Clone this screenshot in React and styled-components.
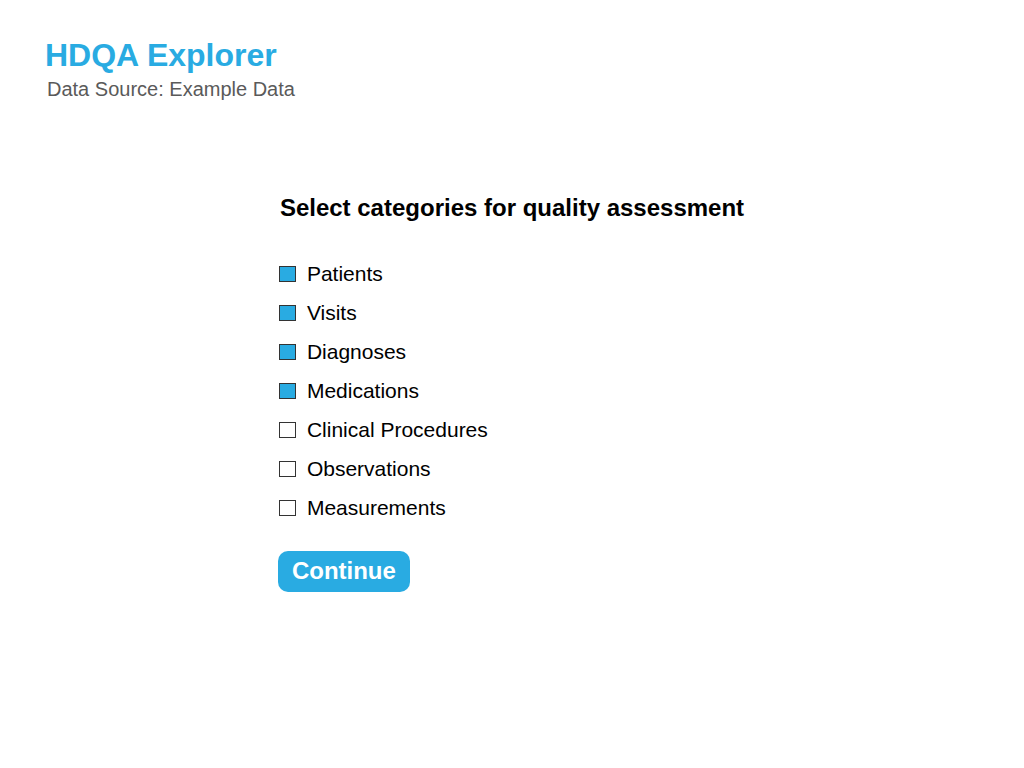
import React, { useState } from "react";
import styled, { createGlobalStyle } from "styled-components";

const GlobalStyle = createGlobalStyle`
  body {
    margin: 0;
    background: #fff;
    font-family: "Liberation Sans", Arial, Helvetica, sans-serif;
    color: #000;
  }
`;

const Page = styled.div`
  width: 100%;
  min-height: 768px;
  display: flex;
  flex-direction: column;
`;

const Header = styled.header`
  padding: 39px 0 0 45px;
  display: flex;
  flex-direction: column;
`;

const Title = styled.h1`
  margin: 0;
  font-size: 32px;
  line-height: 32px;
  font-weight: 700;
  color: #29abe2;
`;

const Subtitle = styled.div`
  margin-top: 8px;
  margin-left: 2px;
  font-size: 20px;
  line-height: 20px;
  color: #5a5a5a;
`;

const Main = styled.main`
  display: flex;
  justify-content: center;
  padding-top: 97px;
`;

const Panel = styled.div`
  display: flex;
  flex-direction: column;
  align-items: flex-start;
`;

const Heading = styled.h2`
  margin: 0 0 34px 0;
  font-size: 24px;
  line-height: 24px;
  font-weight: 700;
`;

const List = styled.div`
  margin-left: -1px;
  display: flex;
  flex-direction: column;
`;

const Row = styled.label`
  height: 39px;
  display: flex;
  align-items: center;
  gap: 11px;
  cursor: pointer;
`;

const Box = styled.input`
  appearance: none;
  margin: 0;
  width: 17px;
  height: 16px;
  box-sizing: border-box;
  border: 1px solid #333;
  background: ${(p) => (p.checked ? "#29abe2" : "#fff")};
  cursor: pointer;
`;

const Label = styled.span`
  font-size: 21px;
  line-height: 21px;
`;

const Button = styled.button`
  margin-top: 24px;
  margin-left: -2px;
  width: 132px;
  height: 41px;
  border: none;
  border-radius: 10px;
  background: #29abe2;
  color: #fff;
  font-family: inherit;
  font-size: 24px;
  line-height: 24px;
  font-weight: 700;
  padding: 0 0 2px;
  cursor: pointer;
`;

const categories = [
  { name: "Patients", on: true },
  { name: "Visits", on: true },
  { name: "Diagnoses", on: true },
  { name: "Medications", on: true },
  { name: "Clinical Procedures", on: false },
  { name: "Observations", on: false },
  { name: "Measurements", on: false },
];

export default function App() {
  const [checked, setChecked] = useState(categories.map((c) => c.on));

  const toggle = (i) =>
    setChecked((prev) => prev.map((v, j) => (j === i ? !v : v)));

  return (
    <Page>
      <GlobalStyle />
      <Header>
        <Title>HDQA Explorer</Title>
        <Subtitle>Data Source: Example Data</Subtitle>
      </Header>
      <Main>
        <Panel>
          <Heading>Select categories for quality assessment</Heading>
          <List>
            {categories.map((c, i) => (
              <Row key={c.name}>
                <Box
                  type="checkbox"
                  checked={checked[i]}
                  onChange={() => toggle(i)}
                />
                <Label>{c.name}</Label>
              </Row>
            ))}
          </List>
          <Button>Continue</Button>
        </Panel>
      </Main>
    </Page>
  );
}
